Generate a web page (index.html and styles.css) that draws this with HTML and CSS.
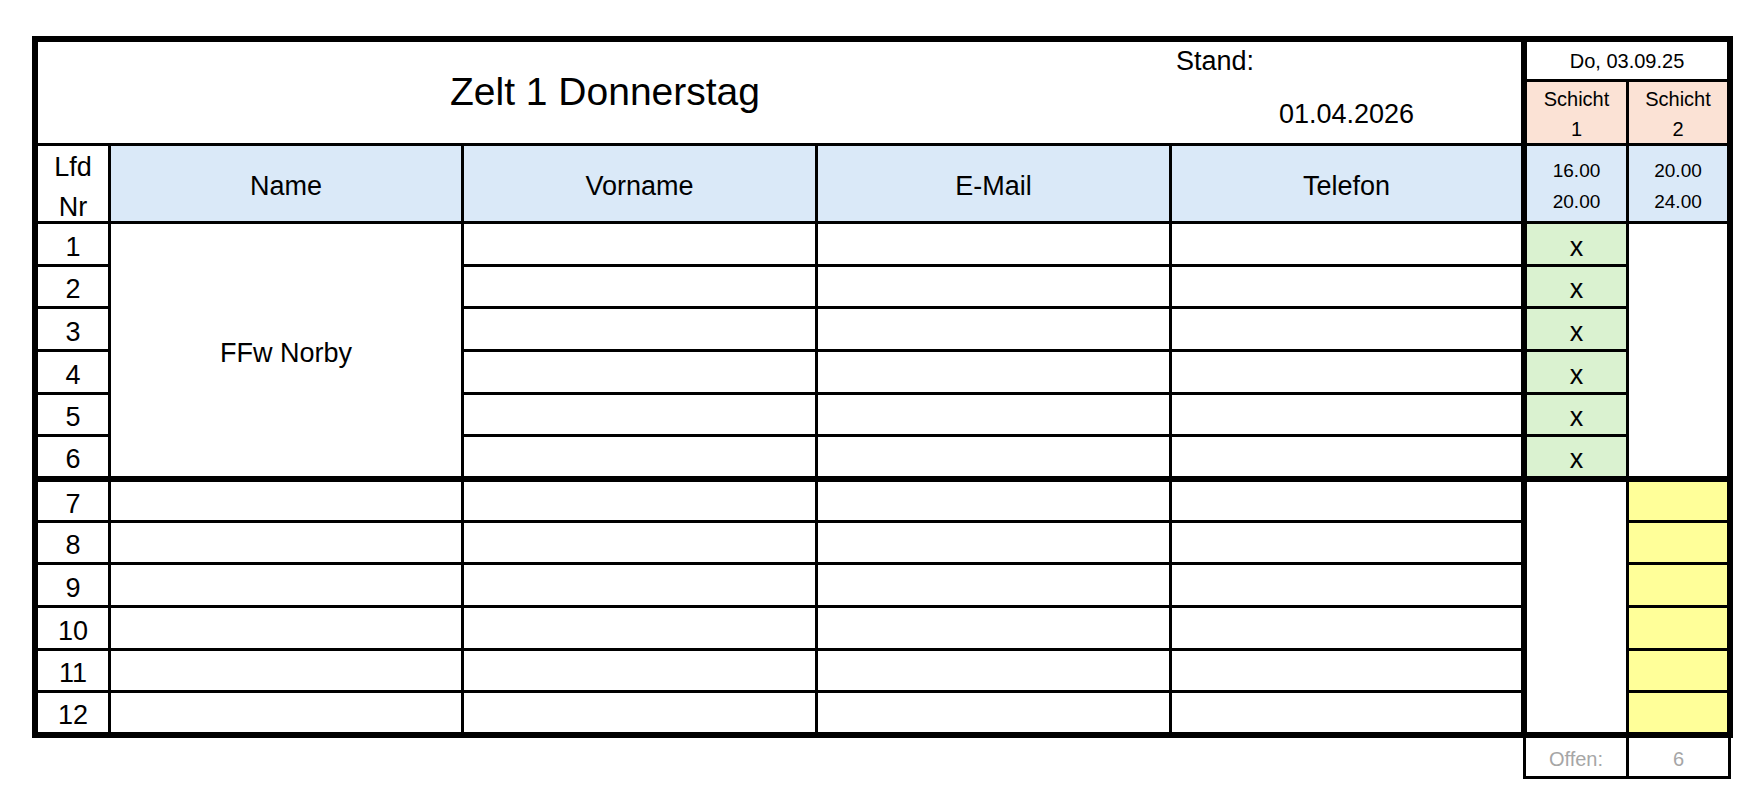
FILE: index.html
```html
<!DOCTYPE html>
<html lang="de">
<head>
<meta charset="utf-8">
<title>Zelt 1 Donnerstag</title>
<link rel="stylesheet" href="styles.css">
</head>
<body>
<div class="page">
  <div class="sheet">
    <div class="c title">Zelt 1 Donnerstag</div>
    <div class="c stand end nb">Stand:</div>
    <div class="c small day end">Do, 03.09.25</div>
    <div class="c date end">01.04.2026</div>
    <div class="c small peach two">Schicht<br>1</div>
    <div class="c small peach two end">Schicht<br>2</div>

    <div class="c lfd">Lfd<br>Nr</div>
    <div class="c blue">Name</div>
    <div class="c blue">Vorname</div>
    <div class="c blue">E-Mail</div>
    <div class="c blue end">Telefon</div>
    <div class="c time blue">16.00<br>20.00</div>
    <div class="c time blue end">20.00<br>24.00</div>

    <div class="c norby thick">FFw Norby</div>
    <div class="c s2top end thick"></div>
    <div class="c s1bottom thick"></div>

    <div class="c">1</div><div class="c"></div><div class="c"></div><div class="c end"></div><div class="c green">x</div>
    <div class="c">2</div><div class="c"></div><div class="c"></div><div class="c end"></div><div class="c green">x</div>
    <div class="c">3</div><div class="c"></div><div class="c"></div><div class="c end"></div><div class="c green">x</div>
    <div class="c">4</div><div class="c"></div><div class="c"></div><div class="c end"></div><div class="c green">x</div>
    <div class="c">5</div><div class="c"></div><div class="c"></div><div class="c end"></div><div class="c green">x</div>
    <div class="c thick">6</div><div class="c thick"></div><div class="c thick"></div><div class="c end thick"></div><div class="c green thick">x</div>

    <div class="c">7</div><div class="c"></div><div class="c"></div><div class="c"></div><div class="c end"></div><div class="c yellow end"></div>
    <div class="c">8</div><div class="c"></div><div class="c"></div><div class="c"></div><div class="c end"></div><div class="c yellow end"></div>
    <div class="c">9</div><div class="c"></div><div class="c"></div><div class="c"></div><div class="c end"></div><div class="c yellow end"></div>
    <div class="c">10</div><div class="c"></div><div class="c"></div><div class="c"></div><div class="c end"></div><div class="c yellow end"></div>
    <div class="c">11</div><div class="c"></div><div class="c"></div><div class="c"></div><div class="c end"></div><div class="c yellow end"></div>
    <div class="c thick">12</div><div class="c thick"></div><div class="c thick"></div><div class="c thick"></div><div class="c end thick"></div><div class="c yellow end thick"></div>
  </div>
  <div class="summary">
    <div class="sum first">Offen:</div>
    <div class="sum">6</div>
  </div>
</div>
</body>
</html>
```

FILE: styles.css
```css
* { box-sizing: border-box; }
html, body { margin: 0; padding: 0; background: #fff; }
body {
  font-family: "Liberation Sans", Arial, sans-serif;
  color: #000;
}
.page {
  padding: 36px 0 0 32px;
}
.sheet {
  display: grid;
  width: max-content;
  grid-template-columns: 73px 353px 354px 354px 355px 102px 104px;
  grid-template-rows: 40px 64px 78px 43px 42px 43px 43px 42px 45px 41px 42px 43px 43px 42px 45px;
  border-top: 6px solid #000;
  border-left: 6px solid #000;
}
.c {
  display: flex;
  align-items: center;
  justify-content: center;
  text-align: center;
  border-right: 3px solid #000;
  border-bottom: 3px solid #000;
  font-size: 27px;
  line-height: 1;
  padding-top: 6px;
  background: #fff;
}
.end { border-right-width: 6px; }
.thick { border-bottom-width: 6px; }
.nb { border-bottom: none; }

.title {
  grid-column: 1 / 5;
  grid-row: 1 / 3;
  border-right: none;
  font-size: 39px;
  padding-top: 0;
  padding-bottom: 2px;
}
.stand {
  justify-content: flex-start;
  align-items: flex-start;
  padding: 6px 0 0 4px;
}
.day { grid-column: span 2; padding-top: 1px; }
.date { padding-top: 4px; }
.small { font-size: 20px; }
.two { line-height: 30px; padding-top: 3px; }
.peach { background: #fbe2d5; }
.blue { background: #dae9f8; }
.green { background: #daf2d0; }
.yellow { background: #ffff99; }
.lfd { line-height: 40px; padding-top: 6px; }
.time { font-size: 19px; line-height: 31px; padding-top: 4px; }

.norby { grid-column: 2; grid-row: 4 / 10; }
.s2top { grid-column: 7; grid-row: 4 / 10; }
.s1bottom { grid-column: 6; grid-row: 10 / 16; }

.summary {
  display: flex;
  margin-left: 1491px;
}
.sum {
  width: 102px;
  height: 41px;
  display: flex;
  align-items: center;
  justify-content: center;
  padding-top: 5px;
  border-right: 3px solid #000;
  border-bottom: 3px solid #000;
  color: #a6a6a6;
  font-size: 20px;
}
.sum.first {
  width: 106px;
  border-left: 3px solid #000;
}
```
